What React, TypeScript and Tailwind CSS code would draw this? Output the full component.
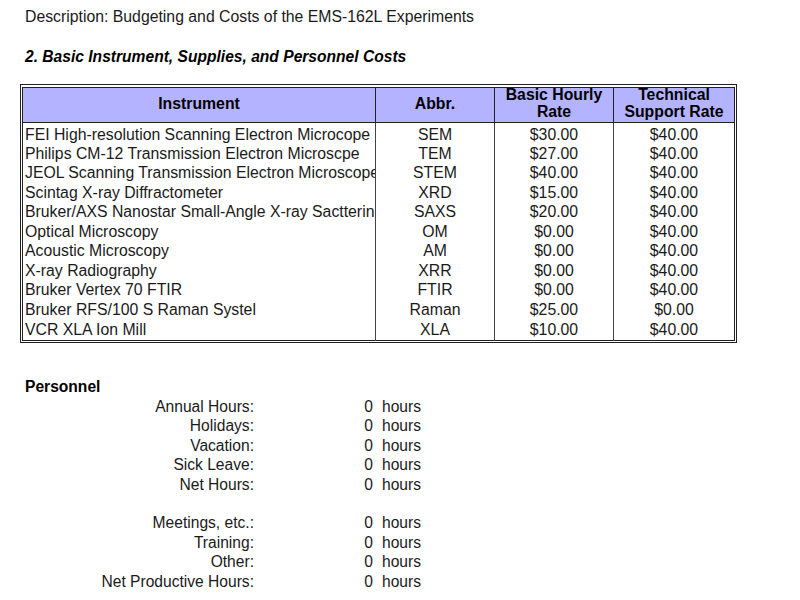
const rows: [string, string, string, string][] = [
  ['FEI High-resolution Scanning Electron Microcope', 'SEM', '$30.00', '$40.00'],
  ['Philips CM-12 Transmission Electron Microscpe', 'TEM', '$27.00', '$40.00'],
  ['JEOL Scanning Transmission Electron Microscope', 'STEM', '$40.00', '$40.00'],
  ['Scintag X-ray Diffractometer', 'XRD', '$15.00', '$40.00'],
  ['Bruker/AXS Nanostar Small-Angle X-ray Sacttering', 'SAXS', '$20.00', '$40.00'],
  ['Optical Microscopy', 'OM', '$0.00', '$40.00'],
  ['Acoustic Microscopy', 'AM', '$0.00', '$40.00'],
  ['X-ray Radiography', 'XRR', '$0.00', '$40.00'],
  ['Bruker Vertex 70 FTIR', 'FTIR', '$0.00', '$40.00'],
  ['Bruker RFS/100 S Raman Systel', 'Raman', '$25.00', '$0.00'],
  ['VCR XLA Ion Mill', 'XLA', '$10.00', '$40.00'],
];

const hours1 = ['Annual Hours:', 'Holidays:', 'Vacation:', 'Sick Leave:', 'Net Hours:'];
const hours2 = ['Meetings, etc.:', 'Training:', 'Other:', 'Net Productive Hours:'];

const HourRow = ({ label }: { label: string }) => (
  <div className="flex h-[19.4px] items-center">
    <div className="w-[254px] text-right">{label}</div>
    <div className="w-[119px] text-right">0</div>
    <div className="pl-[9px]">hours</div>
  </div>
);

export default function App() {
  const last = rows.length - 1;
  return (
    <div
      className="min-h-[600px] w-[800px] bg-white text-[#1a1a1a]"
      style={{ fontFamily: '"Liberation Sans", Arial, sans-serif' }}
    >
      <div className="pl-[25px] pt-[5px] text-[15.8px] leading-[24px]">
        Description: Budgeting and Costs of the EMS-162L Experiments
      </div>
      <div className="pl-[25px] pt-[16px] text-[15.6px] font-bold italic leading-[24px] text-black">
        2. Basic Instrument, Supplies, and Personnel Costs
      </div>

      <div className="ml-[20px] mt-[15px] w-[717px] border border-[#222] px-[1px] pb-[1px] pt-[2px]">
        <table className="w-full table-fixed border-collapse border border-[#222] text-[15.8px] leading-none">
          <colgroup>
            <col className="w-[353px]" />
            <col className="w-[119px]" />
            <col className="w-[119px]" />
            <col />
          </colgroup>
          <thead>
            <tr className="h-[34px] bg-[#b3b3ff] text-center font-bold leading-[17px] text-black">
              <th className="border-b border-r border-[#222]">
                <div className="-translate-y-[2px]">Instrument</div>
              </th>
              <th className="border-b border-r border-[#222]">
                <div className="-translate-y-[2px]">Abbr.</div>
              </th>
              <th className="border-b border-r border-[#222]">
                <div className="-translate-y-[2px]">
                  Basic Hourly
                  <br />
                  Rate
                </div>
              </th>
              <th className="border-b border-[#222]">
                <div className="-translate-y-[2px]">
                  Technical
                  <br />
                  Support Rate
                </div>
              </th>
            </tr>
          </thead>
          <tbody>
            {rows.map(([name, abbr, basic, tech], i) => {
              const rowCls = i === 0 ? 'h-[21.5px]' : i === last ? 'h-[21px] align-top' : 'h-[19.5px]';
              const padCls = i === 0 || i === last ? 'pt-[2px]' : '';
              return (
                <tr key={abbr} className={rowCls}>
                  <td className={`overflow-hidden whitespace-nowrap border-r border-[#444] pl-[2px] ${padCls}`}>
                    {name}
                  </td>
                  <td className={`border-r border-[#444] text-center ${padCls}`}>{abbr}</td>
                  <td className={`border-r border-[#444] text-center ${padCls}`}>{basic}</td>
                  <td className={`text-center ${padCls}`}>{tech}</td>
                </tr>
              );
            })}
          </tbody>
        </table>
      </div>

      <div className="mt-[34px] h-[20px] pl-[25px] text-[15.6px] font-bold leading-[20px] text-black">
        Personnel
      </div>
      <div className="text-[15.6px]">
        {hours1.map((l) => (
          <HourRow key={l} label={l} />
        ))}
        <div className="h-[19.4px]" />
        {hours2.map((l) => (
          <HourRow key={l} label={l} />
        ))}
      </div>
    </div>
  );
}
